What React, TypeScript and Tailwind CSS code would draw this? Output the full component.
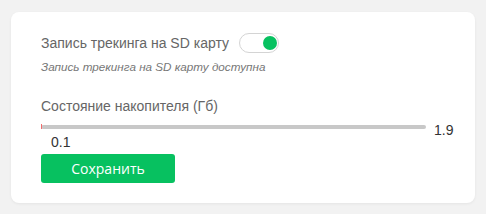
export default function App() {
  return (
    <div className="min-h-[214px] w-[486px] bg-[#f2f2f2] pl-[11px] pt-[12px] font-['Liberation_Sans',Arial,sans-serif]">
      <div className="h-[191px] w-[464px] rounded-[8px] bg-white pl-[30px] pt-[21px] shadow-[0_1px_3px_rgba(0,0,0,0.06)]">
        <div className="flex h-[20px] items-center gap-[10px]">
          <span className="text-[14px] leading-[16px] text-[#666]">Запись трекинга на SD карту</span>
          <div className="flex h-[20px] w-[40px] items-center justify-end rounded-full border border-[#d4d4d4] bg-white pr-[1px]">
            <div className="h-[14px] w-[14px] rounded-full bg-[#07c160]" />
          </div>
        </div>
        <div className="mt-[7px] text-[11.7px] leading-[14px] italic text-[#777]">Запись трекинга на SD карту доступна</div>
        <div className="mt-[24px] text-[14px] leading-[16px] text-[#666]">Состояние накопителя (Гб)</div>
        <div className="mt-[8px] flex h-[12px] items-start">
          <div className="relative mt-[3px] h-[4px] w-[385px] rounded-full bg-[#c8c8c8]">
            <div className="absolute left-0 top-[-1px] h-[5px] w-[1px] bg-[#f26d6d]" />
          </div>
          <span className="ml-[8px] text-[14px] leading-[16px] text-[#333]">1.9</span>
        </div>
        <div className="ml-[10px] text-[14px] leading-[16px] text-[#333]">0.1</div>
        <button className="mt-[4px] flex h-[29px] w-[134px] items-center justify-center rounded-[3px] bg-[#07c160] font-['Open_Sans',sans-serif] text-[14px] text-white">
          Сохранить
        </button>
      </div>
    </div>
  );
}
